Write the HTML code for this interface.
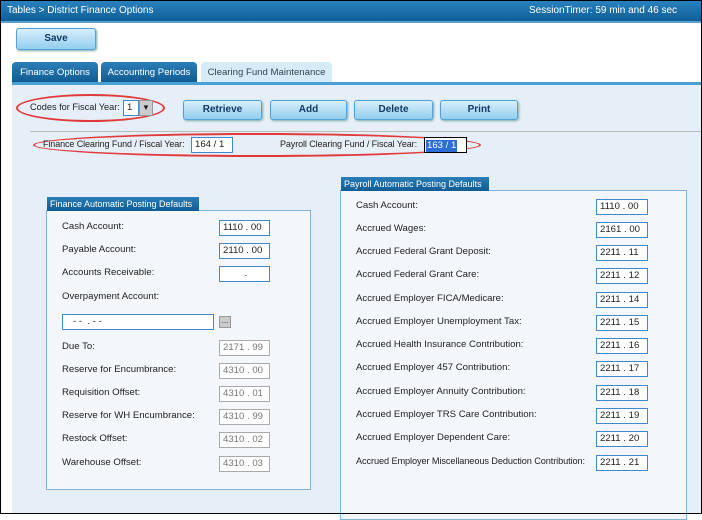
<!DOCTYPE html><html><head><style>
*{box-sizing:border-box;margin:0;padding:0}
body{width:702px;height:514px;overflow:hidden;background:#fff;font-family:"Liberation Sans",sans-serif;font-size:9.6px;color:#222;position:relative;white-space:nowrap}
.a{position:absolute}
#frame{position:absolute;left:0;top:0;width:702px;height:514px;border:1px solid #000;z-index:10;pointer-events:none}
.hdr{left:0;top:0;width:702px;height:23px;background:linear-gradient(#2a83c0,#0f5e96);color:#fff;border-bottom:2px solid #5aa0d0;font-size:10px}
.btn{background:linear-gradient(#d8effc,#93cdef);border:1px solid #4fa3d6;border-radius:3px;color:#123a66;font-weight:bold;text-align:center;line-height:18px;box-shadow:1px 1px 2px #7aa;font-size:10px}
.tab{top:62px;height:21px;background:linear-gradient(#2c7fb8,#0e5a90);color:#fff;border-radius:4px 4px 0 0;text-align:center;line-height:21px;font-size:9.6px}
.inp{background:#fff;border:1px solid #8aa;height:16px;padding-left:3px;line-height:14px;font-size:9.6px}
.dis{color:#777;border-color:#aaa}
.box{border:1px solid #7fb5dc;background:#f3f7fc}
.leg{background:linear-gradient(#2a7db8,#0f5c94);color:#fff;height:14px;line-height:14px;padding-left:3px;font-size:9px;overflow:hidden}
.ell{border:2px solid #e03a3a;border-radius:50%}
</style></head><body>
<div class="a hdr"><span class="a" style="left:7px;top:5px">Tables &gt; District Finance Options</span><span class="a" style="left:529px;top:5px">SessionTimer: 59 min and 46 sec</span></div>
<div class="a btn" style="left:16px;top:28px;width:80px;height:22px;line-height:20px">Save</div>
<div class="a tab" style="left:12px;width:86px">Finance Options</div>
<div class="a tab" style="left:101px;width:96px">Accounting Periods</div>
<div class="a tab" style="left:201px;width:131px;background:#d6ebf8;color:#345">Clearing Fund Maintenance</div>
<div class="a" style="left:12px;top:82px;width:690px;height:432px;background:#e6eef7;border-top:3px solid #4a9fd4"></div>
<div class="a ell" style="left:16px;top:94px;width:149px;height:28px"></div>
<span class="a" style="left:30px;top:102px;font-size:9.2px">Codes for Fiscal Year:</span>
<div class="a inp" style="left:123px;top:100px;width:16px;border-color:#48c">1</div>
<div class="a" style="left:139px;top:100px;width:14px;height:16px;background:#ccc;border:1px solid #999;font-size:8px;text-align:center;line-height:14px">▼</div>
<div class="a btn" style="left:183px;top:100px;width:79px">Retrieve</div>
<div class="a btn" style="left:270px;top:100px;width:77px">Add</div>
<div class="a btn" style="left:354px;top:100px;width:79px">Delete</div>
<div class="a btn" style="left:440px;top:100px;width:78px">Print</div>
<div class="a" style="left:30px;top:131px;width:672px;height:1px;background:#bbb"></div>
<div class="a ell" style="left:33px;top:133px;width:448px;height:24px"></div>
<span class="a" style="left:43px;top:139px;font-size:9px;letter-spacing:-0.1px">Finance Clearing Fund / Fiscal Year:</span>
<div class="a inp" style="left:191px;top:137px;width:42px;border-color:#48c">164 / 1</div>
<span class="a" style="left:280px;top:139px;font-size:9px;letter-spacing:-0.1px">Payroll Clearing Fund / Fiscal Year:</span>
<div class="a inp" style="left:424px;top:137px;width:43px;border:1px solid #000;padding:1px"><span style="background:#2b6fd6;color:#fff;display:inline-block;height:12px;line-height:12px;padding:0 1px">163 / 1</span></div>

<div class="a box" style="left:46px;top:210px;width:265px;height:280px"></div>
<div class="a leg" style="left:47px;top:197px;width:152px">Finance Automatic Posting Defaults</div>
<span class="a" style="left:62px;top:221px">Cash Account:</span><div class="a inp" style="left:219px;top:220px;width:51px;border-color:#48c">1110 . 00</div>
<span class="a" style="left:62px;top:244px">Payable Account:</span><div class="a inp" style="left:219px;top:243px;width:51px;border-color:#48c">2110 . 00</div>
<span class="a" style="left:62px;top:267px">Accounts Receivable:</span><div class="a inp" style="left:219px;top:266px;width:51px;border-color:#48c;text-align:center">.</div>
<span class="a" style="left:62px;top:291px">Overpayment Account:</span>
<div class="a inp" style="left:62px;top:314px;width:152px;border-color:#48c;padding-left:10px">- - &nbsp;. - -</div>
<div class="a" style="left:219px;top:316px;width:12px;height:12px;background:#ccc;border:1px solid #999;font-size:8px;line-height:8px;text-align:center">...</div>
<span class="a" style="left:62px;top:341px">Due To:</span><div class="a inp dis" style="left:219px;top:340px;width:51px">2171 . 99</div>
<span class="a" style="left:62px;top:364px">Reserve for Encumbrance:</span><div class="a inp dis" style="left:219px;top:363px;width:51px">4310 . 00</div>
<span class="a" style="left:62px;top:387px">Requisition Offset:</span><div class="a inp dis" style="left:219px;top:386px;width:51px">4310 . 01</div>
<span class="a" style="left:62px;top:410px">Reserve for WH Encumbrance:</span><div class="a inp dis" style="left:219px;top:409px;width:51px">4310 . 99</div>
<span class="a" style="left:62px;top:433px">Restock Offset:</span><div class="a inp dis" style="left:219px;top:432px;width:51px">4310 . 02</div>
<span class="a" style="left:62px;top:457px">Warehouse Offset:</span><div class="a inp dis" style="left:219px;top:456px;width:51px">4310 . 03</div>

<div class="a box" style="left:340px;top:190px;width:347px;height:330px"></div>
<div class="a leg" style="left:341px;top:177px;width:148px">Payroll Automatic Posting Defaults</div>
<span class="a" style="left:356px;top:200px">Cash Account:</span><div class="a inp" style="left:596px;top:199px;width:52px;border-color:#48c">1110 . 00</div>
<span class="a" style="left:356px;top:223px">Accrued Wages:</span><div class="a inp" style="left:596px;top:222px;width:52px;border-color:#48c">2161 . 00</div>
<span class="a" style="left:356px;top:246px">Accrued Federal Grant Deposit:</span><div class="a inp" style="left:596px;top:245px;width:52px;border-color:#48c">2211 . 11</div>
<span class="a" style="left:356px;top:269px">Accrued Federal Grant Care:</span><div class="a inp" style="left:596px;top:268px;width:52px;border-color:#48c">2211 . 12</div>
<span class="a" style="left:356px;top:293px">Accrued Employer FICA/Medicare:</span><div class="a inp" style="left:596px;top:292px;width:52px;border-color:#48c">2211 . 14</div>
<span class="a" style="left:356px;top:316px">Accrued Employer Unemployment Tax:</span><div class="a inp" style="left:596px;top:315px;width:52px;border-color:#48c">2211 . 15</div>
<span class="a" style="left:356px;top:339px">Accrued Health Insurance Contribution:</span><div class="a inp" style="left:596px;top:338px;width:52px;border-color:#48c">2211 . 16</div>
<span class="a" style="left:356px;top:362px">Accrued Employer 457 Contribution:</span><div class="a inp" style="left:596px;top:361px;width:52px;border-color:#48c">2211 . 17</div>
<span class="a" style="left:356px;top:386px">Accrued Employer Annuity Contribution:</span><div class="a inp" style="left:596px;top:385px;width:52px;border-color:#48c">2211 . 18</div>
<span class="a" style="left:356px;top:409px">Accrued Employer TRS Care Contribution:</span><div class="a inp" style="left:596px;top:408px;width:52px;border-color:#48c">2211 . 19</div>
<span class="a" style="left:356px;top:432px">Accrued Employer Dependent Care:</span><div class="a inp" style="left:596px;top:431px;width:52px;border-color:#48c">2211 . 20</div>
<span class="a" style="left:356px;top:456px;font-size:9.2px;letter-spacing:-0.1px">Accrued Employer Miscellaneous Deduction Contribution:</span><div class="a inp" style="left:596px;top:455px;width:52px;border-color:#48c">2211 . 21</div>
<div id="frame"></div>
</body></html>
